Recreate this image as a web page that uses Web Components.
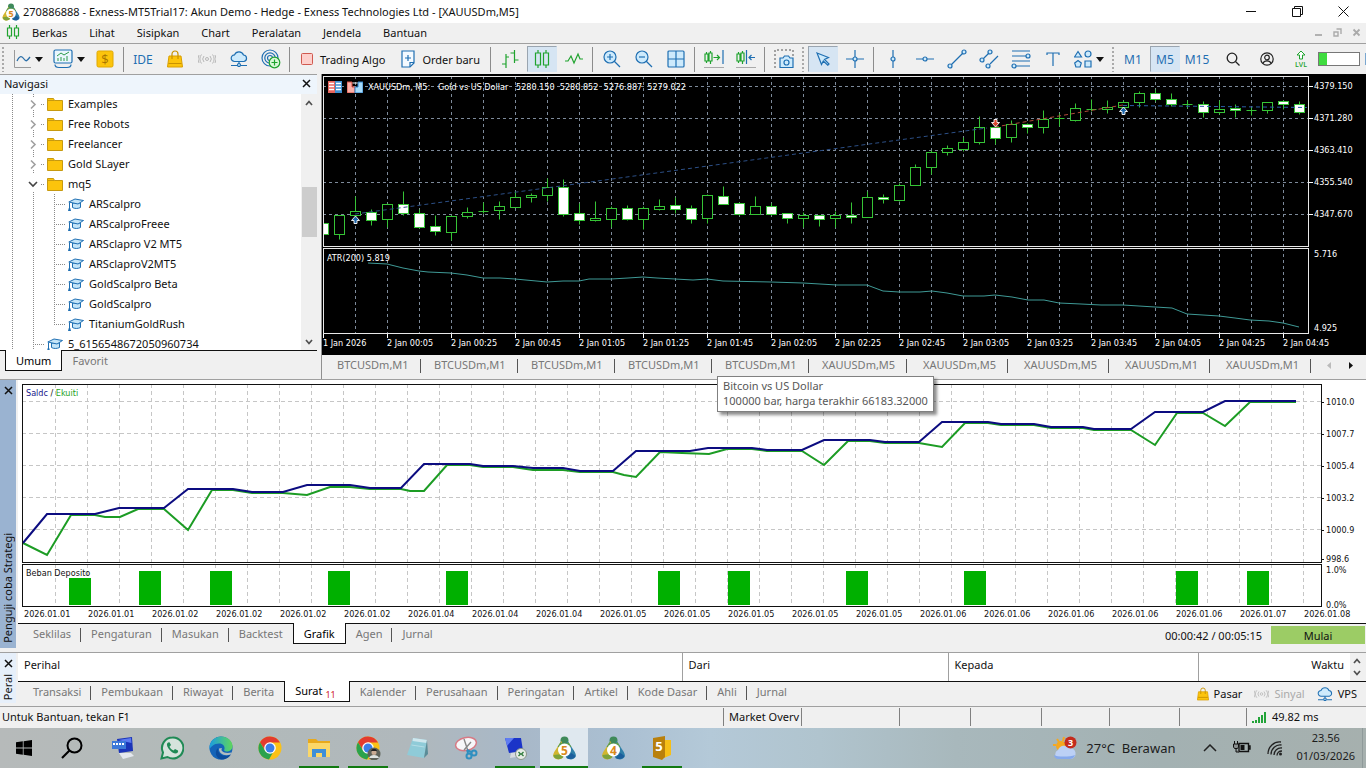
<!DOCTYPE html>
<html lang="id">
<head>
<meta charset="utf-8">
<title>270886888 - Exness-MT5Trial17</title>
<style>
html,body{margin:0;height:100%}
body{font:11px/15px "Noto Sans","Open Sans",sans-serif;color:#111;background:#f0f0f0}
</style>
</head>
<body>
<terminal-app></terminal-app>
<script>
const BASE = `*{box-sizing:border-box}
button{font:inherit;color:inherit;background:none;border:0;padding:0;margin:0;cursor:default}`;
function define(name, css, html, setup) {
  const t = document.createElement('template');
  t.innerHTML = `<style>${BASE}${css}</style>${html}`;
  customElements.define(name, class extends HTMLElement {
    constructor() {
      super();
      this.attachShadow({mode: 'open'}).append(t.content.cloneNode(true));
    }
    connectedCallback() { if (setup && !this.ready) { this.ready = true; setup(this, this.shadowRoot); } }
  });
}

/* ---------- icons ---------- */
const B = 'fill="none" stroke="#1f6fb2" stroke-width="1.2"';
const BF = 'fill="#cdeafc" stroke="#1f6fb2" stroke-width="1.2"';
const G = 'fill="none" stroke="#1fa32e" stroke-width="1.2"';
const mtLogo = (n) => `<circle cx="12" cy="4.500" r="4" fill="#3f8a5a"/><path d="M9 5 3 14c-2 3-3 5-2 7 2 3 6 3 9 1l2-8z" fill="#d2b62f"/><path d="M1 19c0 4 6 6 10 2l-1-3z" fill="#7da23a"/><path d="M15 5l6 9c2 3 3 5 2 7-2 3-6 3-9 1l-3-8z" fill="#2f7fa8"/><path d="M8 6c2 2 6 2 8 0l3 5H5z" fill="#5f9c4c"/><path d="M14 22c3 2 8 1 9-2l-4-3z" fill="#1c5f9c"/><circle cx="12" cy="14" r="6.500" fill="#fff"/><text x="12" y="18.500" text-anchor="middle" font-family="Open Sans" font-weight="700" font-size="12" fill="#d98a1c">${n}</text>`;
const chrome = '<circle cx="12" cy="12" r="11.500" fill="#fbc116"/><path d="M12 .5A11.500 11.500 0 0 0 2 6.200L7.500 15 12 6.500h10A11.500 11.500 0 0 0 12 .5z" fill="#e33b2e"/><path d="M2 6.200A11.500 11.500 0 0 0 11 23.500l5-9-8.500.8z" fill="#2ba24c"/><circle cx="12" cy="12" r="5.800" fill="#fff"/><circle cx="12" cy="12" r="4.500" fill="#3b7de8"/>';
const ICONS = {
  app: [18, 18, '0 0 24 24', mtLogo(5)],
  candles: [14, 16, '0 0 14 16', `<path ${G} d="M3.500 1v3M3.500 12v3M1.500 4h4v8h-4zM10.500 1v3M10.500 12v3M8.500 4h4v8h-4z"/>`],
  linechart: [18, 18, '0 0 18 18', '<path d="M1.500 0v17.500H18" fill="none" stroke="#9a9a9a"/><path d="M4 11c3-6 5-5 7-2s3 2 6-2" fill="none" stroke="#2a6ea8" stroke-width="1.300"/>'],
  indicator: [20, 20, '0 0 20 20', `<rect ${B} x="1" y="1" width="18" height="13" rx="1.500" style="fill:#eaf6fd"/><path ${B} d="M2 15.500c0 2 2 3 4 3h8c2 0 4-1 4-3"/><path d="M4 7l4-3 3 2 5-3M5 12V9M8 12V8M11 12V9M14 12V7" fill="none" stroke="#2a9a4a"/>`],
  dollar: [18, 18, '0 0 18 18', '<rect x="1" y="1" width="16" height="16" rx="1.500" fill="#fcc40c" stroke="#e0a800"/><text x="9" y="13.500" text-anchor="middle" font-family="Open Sans" font-size="13" fill="#a87400">$</text>'],
  bag: [16, 18, '0 0 16 18', '<path d="M2 6h12l1.500 11h-15z" fill="#fcc40c" stroke="#d99f00"/><path d="M5 9V4a3 3 0 0 1 6 0v5M1.500 13.500h13" fill="none" stroke="#c89200" stroke-width="1.200"/>'],
  signal: [18, 14, '0 0 18 14', '<g fill="none" stroke="#b8b8b8"><circle cx="9" cy="7" r="1.500"/><path d="M6 4a4.500 4.500 0 0 0 0 6M12 4a4.500 4.500 0 0 1 0 6M3.500 2.500a7 7 0 0 0 0 9M14.500 2.500a7 7 0 0 1 0 9M1 3a8 8 0 0 0 0 8M17 3a8 8 0 0 1 0 8"/></g>'],
  cloud: [18, 16, '0 0 18 16', `<path ${BF} d="M4.500 10.500a3.300 3.300 0 0 1 0-6.600A4.800 4.800 0 0 1 13.500 4a3.300 3.300 0 0 1 .5 6.500z"/><path ${B} d="M9 10.500V13M1 14.500h6M11 14.500h6"/><circle ${BF} cx="9" cy="14" r="1.500"/>`],
  rings: [20, 20, '0 0 20 20', `<g ${B}><circle cx="9" cy="9" r="2.500"/><circle cx="9" cy="9" r="5.200"/><circle cx="9" cy="9" r="8"/></g><circle cx="13.500" cy="13.500" r="5.300" fill="#d8f8d8" stroke="#1fa32e" stroke-width="1.200"/><path ${G} d="M13.500 10.500v6M10.500 13.500h6"/>`],
  stop: [12, 12, '0 0 12 12', '<rect x=".5" y=".5" width="11" height="11" rx="1" fill="#fdd0cc" stroke="#d0594f"/>'],
  order: [14, 18, '0 0 14 18', `<path ${B} style="fill:#f4faff" d="M1 1h12v12l-4 4H1z"/><path ${B} d="M13 12.500H9V17M7 5v6M4 8h6"/>`],
  bars: [18, 18, '0 0 18 18', `<path ${G} d="M5 4v14M1 14h4M5 7h3M13.500 0v13M9.500 3h4M13.500 10h4"/>`],
  bigcandles: [16, 18, '0 0 16 18', `<path ${G} d="M4 0v3M4 15v3M1.500 3h5v12h-5zM12 0v3M12 15v3M9.500 3h5v12h-5z"/>`],
  zigzag: [18, 14, '0 0 18 14', `<path ${G} d="M0 9h3l3-5 3 7 4-9 2 5h3"/>`],
  zoomin: [18, 18, '0 0 18 18', `<path ${B} d="M11 11l6 6"/><circle ${BF} cx="7" cy="7" r="6"/><path ${B} d="M7 4v6M4 7h6"/>`],
  zoomout: [18, 18, '0 0 18 18', `<path ${B} d="M11 11l6 6"/><circle ${BF} cx="7" cy="7" r="6"/><path ${B} d="M4 7h6"/>`],
  tile: [18, 18, '0 0 18 18', `<rect ${BF} x="1" y="1" width="16" height="16" rx="1"/><path ${B} d="M9 1v16M1 9h16"/>`],
  scroll: [20, 18, '0 0 20 18', `<path ${G} d="M2.500 2v2M2.500 11v2M1 4h3v7H1zM6.500 1v2M6.500 11v3M5 3h3v8H5zM9.500 7.500h6M13 5l2.500 2.500L13 10"/><path ${B} d="M19 0v14"/><path d="M0 17.500h20" stroke="#aaa"/>`],
  shift: [20, 18, '0 0 20 18', `<path ${G} d="M2.500 2v2M2.500 11v2M1 4h3v7H1zM6.500 1v2M6.500 11v3M5 3h3v8H5z"/><path ${B} d="M10.500 0v14M19 7.500h-6M15.500 5L13 7.500l2.500 2.500"/><path d="M0 17.500h20" stroke="#aaa"/>`],
  camera: [20, 20, '0 0 20 20', `<path d="M1 19V1h18v6" fill="none" stroke="#555" stroke-dasharray="2 2"/><path ${BF} d="M6 9h3l1.500-2h4L16 9h3v9.500H6z"/><circle ${BF} cx="12.500" cy="13.500" r="2.500"/>`],
  arrow: [14, 14, '0 0 14 14', `<path ${BF} d="M1 1l11.500 4.500L8.500 7.500 13 12l-1.200 1.200L7.300 9 5.500 12.500z"/>`],
  cross: [18, 18, '0 0 18 18', `<path ${B} d="M9 0v7M9 11v7M0 9h7M11 9h7"/><circle ${BF} cx="9" cy="9" r="2"/>`],
  vline: [18, 18, '0 0 18 18', `<path ${B} d="M9 0v7M9 11v7"/><circle ${BF} cx="9" cy="9" r="2"/>`],
  hline: [18, 18, '0 0 18 18', `<path ${B} d="M0 9h7M11 9h7"/><circle ${BF} cx="9" cy="9" r="2"/>`],
  trend: [20, 20, '0 0 20 20', `<path ${B} d="M4 16L16 4"/><circle ${BF} cx="3" cy="17" r="2"/><circle ${BF} cx="17" cy="3" r="2"/>`],
  channel: [20, 20, '0 0 20 20', `<path ${B} d="M4 10l6-6M11 15l8-8"/><circle ${BF} cx="3" cy="11" r="2"/><circle ${BF} cx="11" cy="3" r="2"/><circle ${BF} cx="9" cy="17" r="2"/>`],
  fibo: [20, 20, '0 0 20 20', `<path ${B} d="M1 2h18M1 7h14M1 12h18M5 17h14"/><circle ${BF} cx="17" cy="7" r="2"/><circle ${BF} cx="3" cy="17" r="2"/>`],
  text: [14, 14, '0 0 14 14', `<path ${B} d="M1 3V1h12v2M7 1v13"/>`],
  shapes: [18, 18, '0 0 18 18', `<path ${BF} d="M4 1.500L7.500 7h-7z"/><circle ${BF} cx="14" cy="4" r="3"/><path ${BF} d="M4 10.500l3.300 2.500-1.200 4H1.900L.7 13zM11 11h6v6h-6z"/>`],
  search: [14, 14, '0 0 14 14', '<path d="M9.500 9.500l4 4" stroke="#222" stroke-width="1.300"/><circle cx="6" cy="6" r="4.800" fill="none" stroke="#222" stroke-width="1.300"/>'],
  user: [14, 14, '0 0 14 14', '<g fill="none" stroke="#222" stroke-width="1.200"><circle cx="7" cy="7" r="6.200"/><circle cx="7" cy="5.500" r="2.300"/><path d="M3 11.500c1-3.500 7-3.500 8 0"/></g>'],
  lvl: [14, 18, '0 0 14 18', `<path d="M5.500 9V5H3l4-4 4 4H8.500v4z" fill="#fff" stroke="#1fa32e"/><text x="7" y="17" text-anchor="middle" font-family="Open Sans" font-size="7" font-weight="600" fill="#1fa32e">LVL</text>`],
  caret: [8, 5, '0 0 8 5', '<path d="M0 0h8L4 5z" fill="#111"/>'],
  folder: [16, 14, '0 0 16 14', '<path d="M.5 1.500h6l1 2h8v10H.5z" fill="#fcc40c" stroke="#c79a10"/><path d="M.5 3.500h7" stroke="#c79a10"/>'],
  cap: [16, 14, '0 0 16 14', '<path d="M4.500 6v4.500c2 1.300 5.500 1.300 8 0V6z" fill="#c4e5f8" stroke="#1f6fb2"/><path d="M.8 5L7 2l8.500 1.500L10 7z" fill="#c4e5f8" stroke="#1f6fb2" stroke-linejoin="round"/><path d="M1.500 5.500v6" fill="none" stroke="#1f6fb2"/><path d="M0 14l.8-3h1.400L3 14z" fill="#1f6fb2"/>'],
  close: [9, 9, '0 0 9 9', '<path d="M1 1l7 7M8 1L1 8" stroke="#111" stroke-width="1.500"/>'],
  up: [8, 6, '0 0 8 6', '<path d="M1 5l3-3.500L7 5" fill="none" stroke="#505050" stroke-width="1.700"/>'],
  down: [8, 6, '0 0 8 6', '<path d="M1 1l3 3.500L7 1" fill="none" stroke="#505050" stroke-width="1.700"/>'],
  min: [11, 11, '0 0 11 11', '<path d="M0 5.500h10" stroke="#111"/>'],
  restore: [11, 11, '0 0 11 11', '<path d="M.5 2.500h8v8h-8zM2.500 2.500v-2h8v8h-2" fill="none" stroke="#111"/>'],
  x: [11, 11, '0 0 11 11', '<path d="M.5.5l10 10M10.500.5l-10 10" stroke="#111"/>'],
  mmin: [9, 9, '0 0 9 9', '<path d="M1 7h7" stroke="#aaa" stroke-width="1.800"/>'],
  mrestore: [9, 9, '0 0 9 9', '<path d="M1 4h4v4H1zM3.500 1H8v5" fill="none" stroke="#aaa" stroke-width="1.400"/>'],
  mx: [9, 9, '0 0 9 9', '<path d="M1.500 1.500l6 6M7.500 1.500l-6 6" stroke="#aaa" stroke-width="1.800"/>'],
  left: [5, 7, '0 0 5 7', '<path d="M4 0v7L0 3.500z" fill="#bbb"/>'],
  right: [5, 7, '0 0 5 7', '<path d="M1 0v7l4-3.500z" fill="#111"/>'],
  depth: [14, 12, '0 0 14 12', '<rect width="7" height="12" fill="#e8655c"/><rect x="7" width="7" height="12" fill="#3f8fd0"/><path d="M1 2.500h5M1 5.500h5M1 8.500h5M8 2.500h5M8 5.500h5M8 8.500h5" stroke="#fff" stroke-width="1.600"/>'],
  trade: [16, 12, '0 0 16 12', '<path d="M0 1h5v5h3v6H0z" fill="#fbb0a8" stroke="#d84c40"/><path d="M16 1h-5v5H8v6h8z" fill="#a8dcfb" stroke="#2f80c8"/><path d="M5.500 2h5" stroke="#fff"/>'],
  ping: [14, 11, '0 0 14 11', '<path d="M1 11V9M4 11V8M7 11V5M10 11V3M13 11V0" stroke="#22a338" stroke-width="2"/>'],
  win: [16, 16, '0 0 16 16', '<path d="M0 2.300l6.800-1v6.300H0zM7.600 1.200L16 0v7.600H7.600zM0 8.400h6.800v6.300L0 13.700zM7.600 8.400H16V16l-8.400-1.200z" fill="#000"/>'],
  find: [22, 22, '0 0 22 22', '<circle cx="13.500" cy="8.500" r="7" fill="none" stroke="#000" stroke-width="2"/><path d="M8.500 13.500L1 21" stroke="#000" stroke-width="2.200"/>'],
  rdp: [24, 24, '0 0 24 24', '<path d="M6 3l15-2 1 14-14 2z" fill="#1b34b8"/><path d="M7 4l13-2 .5 5z" fill="#5c7af0"/><path d="M1 5h14v8H1z" fill="#3c78d8"/><path d="M2 8h12" stroke="#fff" stroke-width="2" stroke-dasharray="2 1"/><path d="M8 17h12l3 3-11 3z" fill="#e4e8ee"/>'],
  whatsapp: [24, 24, '0 0 24 24', '<path d="M12.500 1.500a10.500 10.500 0 1 1-5 19.500L1.500 22.500l1.500-6A10.500 10.500 0 0 1 12.500 1.500z" fill="#d5e3dc" stroke="#1f8a55" stroke-width="2"/><path d="M8 6.500c-1.500 1-1.500 3 .5 6s5 5 7.500 5c1.500-.5 2.500-1.500 2-3l-3-1.500-1.500 1.500c-2-.8-3-2-4-3.800L11 9 9.500 6.200z" fill="#1f8a55"/>'],
  edge: [24, 24, '0 0 24 24', '<defs><linearGradient id="e" x1="0" x2="1"><stop stop-color="#1b9de0"/><stop offset="1" stop-color="#5fd65c"/></linearGradient></defs><circle cx="12" cy="12" r="11.500" fill="#1464b8"/><path d="M.5 11C1 4 7 .5 12 .5c7 0 11.500 5 11.500 9.500 0 4-3 5.500-6 5.500-2 0-3-1-2-2.500C16 10 14 7.500 10 7.500 5 7.500 1 11 .5 14z" fill="url(#e)"/><path d="M9 12c-1 5 4 9 10 7.500l3-1A11.500 11.500 0 0 1 12 23.500C7 22 5 16 9 12z" fill="#0c4c9c"/><path d="M13 12c-2 3 2 6 9.500 4.500l-1 2C15 21 9.500 17 10 12.500z" fill="#b2bcbf"/>'],
  chrome: [24, 24, '0 0 24 24', chrome],
  files: [24, 24, '0 0 24 24', '<path d="M1 3h8l2 2h12v16H1z" fill="#e8a91c"/><path d="M1 7h22v14H1z" fill="#fbd768"/><path d="M5 21v-8h14v8h-4v-4H9v4z" fill="#3f8fd8"/>'],
  chrome2: [25, 24, '0 0 25 24', chrome + '<circle cx="18" cy="18" r="6.500" fill="#5d6258"/><circle cx="18" cy="16.500" r="2.500" fill="#c9ab92"/><path d="M13 22c1-4 9-4 10 0z" fill="#dfe4e0"/><path d="M15 15c1-3 5-3 6 0z" fill="#222"/>'],
  notepad: [24, 24, '0 0 24 24', '<path d="M8 2l14 2-3 18L2 19z" fill="#8fcbd8"/><path d="M8 2l14 2-.5 3-14-2z" fill="#cfe7ee"/><path d="M22 4l1 14-4 4z" fill="#5a8c98"/><path d="M6.500 9l13 2" stroke="#b5dde6"/>'],
  snip: [24, 24, '0 0 24 24', '<ellipse cx="12" cy="8" rx="10.500" ry="6.500" fill="#f7f7f9" stroke="#d77a85" stroke-width="1.500" transform="rotate(-12 12 8)"/><path d="M10 3l4 12M17 6l-7 8" stroke="#888" stroke-width="1.400"/><g fill="none" stroke="#2f8fc0" stroke-width="2"><circle cx="15" cy="20" r="2.500"/><circle cx="20" cy="17" r="2.500"/><path d="M14 17l-1-3M17 16l-4-2"/></g>'],
  monitor: [24, 24, '0 0 24 24', '<path d="M2 2l16 0 2 13-14 2z" fill="#1b34c8"/><path d="M2 2h9l-7 8z" fill="#5f7cf2"/><path d="M8 17l9-1 2 4-12 2z" fill="#d7dbe0"/><circle cx="18" cy="18" r="5.500" fill="#e6ece6" stroke="#8a958a"/><path d="M15.500 20l2-2-2-2M20.500 16l-2 2 2 2" fill="none" stroke="#2d7a3a" stroke-width="1.300"/>'],
  mt5: [25, 24, '0 0 24 24', mtLogo(5)],
  mt4: [25, 24, '0 0 24 24', mtLogo(4)],
  editor: [20, 24, '0 0 20 24', '<path d="M8 4h11v15l-7 3z" fill="#f6bf17"/><path d="M1 2l12-2v21l-3 3-9-3z" fill="#b9800c"/><text x="7" y="15" text-anchor="middle" font-family="Open Sans" font-weight="700" font-size="13" fill="#fff">5</text>'],
  weather: [26, 24, '0 0 26 24', '<circle cx="9" cy="10" r="5" fill="#f5a821"/><path d="M5 3l2 3M1 9h3M12 1l-1 4" stroke="#f5a821" stroke-width="2"/><path d="M6 23a5 5 0 0 1 0-9 6.500 6.500 0 0 1 11-2 5.500 5.500 0 0 1 2 11z" fill="#bcd0f5"/><path d="M2 19c3 2 16 2 21 0-1 3-3 4-5 4H6c-2 0-4-2-4-4z" fill="#86a9ec"/><circle cx="18.500" cy="6.500" r="6" fill="#c42b1c"/><text x="18.500" y="10" text-anchor="middle" font-family="Open Sans" font-weight="700" font-size="9" fill="#fff">3</text>'],
  chevron: [14, 8, '0 0 14 8', '<path d="M1 7l6-6 6 6" fill="none" stroke="#222" stroke-width="1.500"/>'],
  battery: [18, 14, '0 0 18 14', '<path d="M6 2.500h9.500v8H6zM15.500 5h1.500v3h-1.500" fill="none" stroke="#111" stroke-width="1.400"/><path d="M7.500 4h4v5h-4z" fill="#111"/><path d="M1.500 0v3M4.500 0v3M.5 3h5v3l-1 1.500h-3L.5 6zM3 7.500v3.500h3" fill="#8a9090" stroke="#111"/>'],
  wifi: [16, 16, '0 0 16 16', '<g fill="none" stroke="#222" stroke-width="1.300"><path d="M1 14C1 7 7 1 14 2M4 14.500C4 9 9 4 14.500 5M7 15c0-4 3.500-7.500 8-7M10 15.500c0-2.500 2-4.500 5-4.500"/></g><circle cx="13.500" cy="14" r="1.500" fill="#222"/>']
};
customElements.define('mt-icon', class extends HTMLElement {
  constructor() { super(); this.attachShadow({mode: 'open'}); }
  connectedCallback() {
    const [w, h, box, body] = ICONS[this.getAttribute('name')];
    const s = this.getAttribute('width');
    const W = s ? +s : w, H = s ? Math.round(h * s / w) : h;
    this.shadowRoot.innerHTML = `<style>:host{display:inline-flex;flex:none}svg{display:block}</style><svg width="${W}" height="${H}" viewBox="${box}" aria-hidden="true">${body}</svg>`;
  }
});
const ic = (n, w) => `<mt-icon name="${n}"${w ? ` width="${w}"` : ''}></mt-icon>`;

/* ---------- title, menu ---------- */
define('title-bar', `:host{display:flex;align-items:center;height:23px;background:#fff;padding-left:2px}
span{flex:1;padding-left:3px}button{width:46px;height:22px;display:flex;align-items:center;justify-content:center}`,
`${ic('app')}<span>270886888 - Exness-MT5Trial17: Akun Demo - Hedge - Exness Technologies Ltd - [XAUUSDm,M5]</span>
<button aria-label="Minimize">${ic('min')}</button><button aria-label="Restore">${ic('restore')}</button><button aria-label="Close">${ic('x')}</button>`);

define('menu-bar', `:host{display:flex;align-items:center;height:21px;border-bottom:1px solid #a0a0a0;padding:0 0 2px 6px}
nav{display:flex;flex:1;padding-left:1px}nav button{padding:0 11px}.w{width:19px;display:flex;justify-content:center}`,
`${ic('candles')}<nav>${['Berkas','Lihat','Sisipkan','Chart','Peralatan','Jendela','Bantuan'].map(t => `<button>${t}</button>`).join('')}</nav>
<button class="w" aria-label="Minimize chart">${ic('mmin')}</button><button class="w" aria-label="Restore chart">${ic('mrestore')}</button><button class="w" aria-label="Close chart">${ic('mx')}</button>`);

/* ---------- toolbar ---------- */
define('tool-button', `:host{display:flex;flex:none;width:32px;padding:0 1px}
:host([wide]){width:41px}:host([label]){width:auto}:host([end]){width:34px}
button{flex:1;height:26px;display:flex;align-items:center;justify-content:center;gap:4px;border:1px solid transparent;color:#1f6fb2;font-size:12px}
:host([label]) button{color:#111;font-size:11px;gap:7px;padding:0 6px}
:host([active]) button{background:#d6e5f3;border-color:#9aa5b0 #d6e5f3 #d6e5f3 #9aa5b0}`,
`<button><slot></slot></button>`, (el, r) => { const a = el.getAttribute('name'); if (a) r.querySelector('button').setAttribute('aria-label', a); });
const tb = (n, attr = '') => `<tool-button name="${n}" ${attr}>${ic(n)}${attr.includes('wide') ? ic('caret') : ''}</tool-button>`;
const sep = '<i class="sep"></i>', grip = '<i class="grip"></i>';
define('tool-bar', `:host{display:flex;align-items:center;height:30px;overflow:hidden}
.sep{width:6px;height:25px;flex:none;border-left:2px solid transparent;box-shadow:inset 1px 0 #8c8c8c}
.grip{width:7px;height:25px;flex:none;background:repeating-linear-gradient(#aaa 0 2px,transparent 2px 4px) 2px 0/2px 100% no-repeat}
.end{display:flex;align-items:center;padding-left:3px;flex:1}
meter{appearance:none;width:42px;height:14px;border:1px solid #777;background:linear-gradient(90deg,#3fdc3f 8px,#fff 8px);display:block;flex:none}
meter::-webkit-meter-inner-element{display:none}
.edge{width:1px;height:12px;background:#7aa7d0;margin-left:auto}`,
grip + tb('linechart', 'wide') + tb('indicator', 'wide') + tb('dollar') + sep +
'<tool-button>IDE</tool-button>' + tb('bag') + tb('signal') + tb('cloud') + tb('rings') + sep +
`<tool-button label>${ic('stop')}Trading Algo</tool-button><tool-button label>${ic('order')}Order baru</tool-button>` + sep +
tb('bars') + tb('bigcandles', 'active') + tb('zigzag') + sep + tb('zoomin') + tb('zoomout') + tb('tile') + sep +
tb('scroll') + tb('shift') + sep + tb('camera') + grip + tb('arrow', 'active') + tb('cross') + sep +
tb('vline') + tb('hline') + tb('trend') + tb('channel') + tb('fibo') + tb('text') + tb('shapes', 'wide') + grip +
'<tool-button>M1</tool-button><tool-button active>M5</tool-button><tool-button>M15</tool-button>' +
`<div class="end">${tb('search', 'end')}${tb('user', 'end')}${tb('lvl', 'end')}<meter min="0" max="40" value="8" aria-label="Level"></meter><i class="edge"></i></div>`);

/* ---------- tabs ---------- */
define('tab-item', `:host{display:flex;position:relative;flex:none;height:20px;color:#777}
:host([sep])::after{content:"";width:1px;height:14px;background:#555;margin-top:4px;margin-left:-1px}
button{padding:0 var(--pad,10px);height:18px}
:host([active]){color:#000;background:#fff;border:1px solid #111;border-top:0;margin-top:-1px;height:21px}:host([active]) button{height:20px}`,
`<button role="tab"><slot></slot></button><slot name="tip"></slot>`);
define('tab-bar', `:host{display:flex;border-top:1px solid #111;padding-left:5px;height:27px}
:host([plain]){border-top:0;padding-left:3px;--pad:12px;height:24px}`, `<slot></slot>`);
const tabs = (list, active) => list.map((t, i) => `<tab-item ${i === active ? 'active' : (i + 1 === active || i === list.length - 1) ? '' : 'sep'}>${t}</tab-item>`).join('');

/* ---------- navigator ---------- */
const dots = 'stroke="#8a8a8a" stroke-dasharray="1 1" fill="none"';
const guides = {
  closed: `<svg width="44" height="20"><path ${dots} d="M12.500 0v20M33.500 0v4M33.500 16v4M41 10.500h3"/><path d="M31 6.500l4 4-4 4" fill="none" stroke="#a0a0a0" stroke-width="1.600"/></svg>`,
  open: `<svg width="44" height="20"><path ${dots} d="M12.500 0v20M33.500 18v2M41 10.500h3"/><path d="M29 8l4 4 4-4" fill="none" stroke="#444" stroke-width="1.600"/></svg>`,
  child: `<svg width="65" height="20"><path ${dots} d="M12.500 0v20M33.500 0v20M54.500 0v20M54 10.500h11"/></svg>`,
  last: `<svg width="65" height="20"><path ${dots} d="M12.500 0v20M33.500 0v20M54.500 0v10M54 10.500h11"/></svg>`,
  leaf: `<svg width="44" height="20"><path ${dots} d="M12.500 0v20M33.500 0v20M33 10.500h11"/></svg>`
};
define('tree-row', `:host{display:flex;align-items:center;height:20px;white-space:nowrap}
div{display:flex;margin-right:3px}div svg{display:block}mt-icon{margin-right:5px}slot{display:block;margin-bottom:2px}`,
`<div></div><slot></slot>`, (el, r) => {
  const k = el.getAttribute('kind');
  r.querySelector('div').innerHTML = guides[k];
  r.querySelector('div').insertAdjacentHTML('afterend', ic(k === 'closed' || k === 'open' ? 'folder' : 'cap'));
});
const row = (k, t) => `<tree-row role="treeitem" kind="${k}">${t}</tree-row>`;
define('nav-panel', `:host{display:flex;flex-direction:column;flex:none;width:317px;border-top:1px solid #a0a0a0}
header{display:flex;justify-content:space-between;align-items:center;height:19px;padding:0 6px 2px 4px;background:#eef5fc}
.body{display:flex;height:256px;background:#fff}
.tree{flex:1;overflow:hidden}
.bar{width:16px;background:#f0f0f0;display:flex;flex-direction:column;align-items:center;padding:6px 0 5px}
.thumb{width:15px;height:50px;background:#cdcdcd;margin-top:81px;margin-bottom:auto}`,
`<header>Navigasi<button aria-label="Close">${ic('close')}</button></header>
<div class="body"><div class="tree" role="tree">` +
['Examples','Free Robots','Freelancer','Gold SLayer'].map(t => row('closed', t)).join('') + row('open', 'mq5') +
['ARScalpro','ARScalproFreee','ARSclapro V2 MT5','ARSclaproV2MT5','GoldScalpro Beta','GoldScalpro'].map(t => row('child', t)).join('') +
row('last', 'TitaniumGoldRush') + row('leaf', '5_6156548672050960734') +
`</div><div class="bar">${ic('up')}<div class="thumb"></div>${ic('down')}</div></div>
<tab-bar>${tabs(['Umum','Favorit'], 0)}</tab-bar>`);

/* ---------- price chart ---------- */
/* kind, high, top, bottom, low; one bar every 16px */
const BARS = [['w',223,223,234,234],['g',215,215,234,239],['g',196,211,215,219],['w',209,212,220,225],['g',203,204,219,227],['w',191,204,213,215],['w',209,213,227,228],['w',215,226,231,235],['g',215,216,232,240],['g',207,212,216,218],['d',202,211,211,213],['g',201,206,210,219],['g',191,197,207,207],['g',193,195,197,202],['g',178,187,195,201],['w',179,187,214,216],['w',203,213,220,224],['g',201,218,220,221],['g',206,208,219,227],['w',205,208,219,220],['g',206,208,219,229],['g',199,206,209,210],['w',197,205,209,213],['w',205,208,219,223],['g',194,195,218,223],['w',186,196,204,204],['w',202,203,214,215],['g',196,206,214,214],['w',203,206,214,215],['w',213,213,218,223],['g',212,215,218,227],['w',215,215,219,226],['g',211,215,218,227],['w',202,215,217,223],['g',191,197,217,217],['w',194,197,199,203],['g',183,185,200,201],['g',164,167,185,185],['g',150,152,167,174],['g',145,148,152,155],['g',137,142,149,151],['g',116,127,142,144],['w',123,127,138,144],['g',120,124,137,142],['w',123,124,127,133],['g',110,119,127,133],['d',113,118,118,126],['g',103,108,120,121],['d',99,109,109,111],['g',100,107,109,113],['g',100,102,107,108],['g',91,93,102,107],['w',89,93,99,101],['w',93,99,104,106],['d',100,104,104,108],['w',101,104,112,117],['g',100,109,112,114],['w',104,108,110,117],['d',107,110,110,115],['g',102,102,110,113],['w',100,101,104,109],['w',101,104,112,114]];
const ATR = '368,263 387,264 403,268 419,271 428,272 451,273 467,275 483,278 500,278 515,279 547,282 563,281 579,281 589,279 611,279 628,278 643,277 657,278 693,280 707,279 723,281 771,282 803,283 837,285 867,285 883,291 899,292 920,292 932,291 947,293 963,296 984,296 995,295 1012,297 1028,300 1044,300 1059,303 1081,304 1101,305 1123,305 1155,307 1172,308 1187,314 1219,316 1235,318 1250,320 1269,321 1283,323 1299,327';
const cols = (n, first, h) => Array.from({length: n}, (_, k) => `M${first + 32 * k}.500 0v${h}`).join('');
const candle = ([k, h, t, b, l], i) => {
  const x = i * 16 + .5, y = v => v - 76 + .5;
  if (k === 'd') return `<path d="M${x} ${y(h)}V${y(l)}M${x - 5} ${y(t)}h10"/>`;
  return `<path d="M${x} ${y(h)}V${y(t)}M${x} ${y(b)}V${y(l)}"/><rect x="${x - 5}" y="${y(t)}" width="10" height="${b - t}" ${k === 'w' ? 'fill="#fff"' : 'fill="#000"'}/>`;
};
const marker = (x, y, c, flip = 1) => `<path transform="translate(${x - 322.5} ${y - 76}) scale(1 ${flip})" d="M0-4L4 .5H1.500v3h-3v-3H-4z" fill="${c}" stroke="#fff" stroke-width=".9"/>`;
const GR = 'fill="none" stroke="#7d8a9a" stroke-dasharray="3 3"';
define('price-chart', `:host{display:flex;flex-direction:column;background:#000;color:#fff;padding:2px 0 0 1px;height:281px;font:9px/12px "DejaVu Sans Condensed","DejaVu Sans",sans-serif}
.row{display:flex}.plot{flex:1;min-width:0;position:relative;outline:1px solid #e8e8e8;outline-offset:-1px}
svg{display:block;width:100%}.p1{height:171px;margin-bottom:1px}.p2{height:86px}
.p1 svg{height:171px}.p2 svg{height:86px}
.head{position:absolute;left:5px;top:5px;display:flex;align-items:center;gap:5px;white-space:pre}
.sub{position:absolute;left:4px;top:4px}
.axis{width:57px;display:flex;flex-direction:column}
.axis.a{gap:12px}.axis.a span{line-height:20px;display:flex;align-items:center;gap:1px}
.axis.a span::before{content:"";width:4px;height:1px;background:#fff}
.axis.b{justify-content:space-between;padding-left:5px}
.time{display:flex;height:20px}
.time span{width:64px;flex:none;white-space:nowrap;padding-top:3px;background:linear-gradient(#fff,#fff) 0 0/1px 4px no-repeat}`,
`<div class="row"><div class="plot p1"><svg>
<path ${GR} d="${cols(60, 32, 171)}"/>${[10,42,74,106,138].map(y => `<line ${GR} x1="0" x2="100%" y1="${y}.500" y2="${y}.500"/>`).join('')}
<g stroke="#36c436" fill="none">${BARS.map(candle).join('')}</g>
<path d="M32 138L664 52" stroke="#2c4f86" stroke-dasharray="4 3"/><path d="M672 51L800 29" stroke="#b04a3a" stroke-dasharray="4 3"/><path d="M800 29.500L984 31.500" stroke="#2c5fa6" stroke-dasharray="4 3"/>
${marker(355, 220, '#1c64a8')}${marker(1123, 111, '#1c64a8')}${marker(995, 123, '#d8442c', -1)}</svg>
<div class="head">${ic('depth')}${ic('trade')}<span>XAUUSDm, M5:   Gold vs US Dollar   5280.150  5280.852  5276.887  5279.022</span></div></div>
<div class="axis a">${['4379.150','4371.280','4363.410','4355.540','4347.670'].map(t => `<span>${t}</span>`).join('')}</div></div>
<div class="row"><div class="plot p2"><svg><path ${GR} d="${cols(60, 32, 86)}"/>
<polyline transform="translate(-323 -248)" points="${ATR}" fill="none" stroke="#3f9a96"/></svg><div class="sub">ATR(200) 5.819</div></div>
<div class="axis b"><span>5.716</span><span>4.925</span></div></div>
<div class="time">${['1 Jan 2026','00:05','00:25','00:45','01:05','01:25','01:45','02:05','02:25','02:45','03:05','03:25','03:45','04:05','04:25','04:45'].map((t, i) => `<span>${i ? '2 Jan ' + t : t}</span>`).join('')}</div>`);

define('hover-tip', `:host{position:absolute;left:4px;top:21px;z-index:5;white-space:nowrap;background:#fff;border:1px solid #808080;color:#575757;padding:1px 5px 3px;box-shadow:3px 3px 3px rgba(0,0,0,.45)}`, `<slot></slot>`);

define('chart-area', `:host{display:block;flex:1;min-width:0;border-left:1px solid #909090;margin-left:4px}
.m1{width:97px}.m5{width:101px}
.end{margin-left:auto;display:flex;gap:16px;align-items:center;padding-right:13px;height:20px}.end button{display:flex}`,
`<price-chart></price-chart><tab-bar plain>` +
['BTCUSDm,M1','BTCUSDm,M1','BTCUSDm,M1','BTCUSDm,M1','BTCUSDm,M1','XAUUSDm,M5','XAUUSDm,M5','XAUUSDm,M5','XAUUSDm,M1','XAUUSDm,M1'].map((t, i) =>
`<tab-item sep class="${i < 5 ? 'm1' : 'm5'}">${t}${i === 4 ? '<hover-tip slot="tip" role="tooltip">Bitcoin vs US Dollar<br>100000 bar, harga terakhir 66183.32000</hover-tip>' : ''}</tab-item>`).join('') +
`<div class="end"><button aria-label="Previous">${ic('left')}</button><button aria-label="Next">${ic('right')}</button></div></tab-bar>`);

/* ---------- strategy tester ---------- */
const BAL = '23,543 47,514 95,514 119,508 164,508 188,489 233,489 252,492 283,492 307,485 350,485 370,488 401,488 424,464 470,464 483,466 513,466 533,468 563,468 580,471 613,471 636,451 690,451 708,448 752,448 767,450 802,450 824,440 870,440 885,442 919,442 942,422 988,422 1001,424 1034,424 1051,427 1083,427 1094,429 1131,429 1155,412 1203,412 1225,401 1296,401';
const EQ = '23,543 47,555 71,515 95,515 105,517 120,517 138,509 164,509 188,530 212,490 233,490 252,493 283,493 307,495 330,487 350,487 370,489 401,489 410,491 424,491 447,465 470,465 483,467 513,467 533,470 563,470 580,472 613,472 624,475 636,477 660,452 682,453 709,454 727,449 752,449 767,451 802,451 824,465 848,441 870,441 885,443 919,443 942,447 965,423 988,423 1001,425 1034,425 1051,428 1083,428 1094,430 1131,430 1155,445 1177,413 1203,413 1225,426 1250,402 1296,402';
const GT = 'fill="none" stroke="#c6c6c6" stroke-dasharray="4 3"';
define('side-strip', `:host{display:flex;flex-direction:column;justify-content:space-between;align-items:center;flex:none;width:16px;overflow:hidden}
button{margin-top:6px;display:flex}span{writing-mode:vertical-rl;transform:rotate(180deg);white-space:nowrap;line-height:16px}`,
`<button aria-label="Close">${ic('close')}</button><span><slot></slot></span>`);
define('tester-panel', `:host{display:flex;height:274px;border-bottom:1px solid #a0a0a0;border-top:1px solid #a0a0a0;background:#f0f0f0}
side-strip{background:#9ab3d1;height:268px;padding-bottom:5px}
main{flex:1;min-width:0;margin-left:2px}
.graph{background:#fff;height:243px;padding:4px 0 0 4px;font:9px/12px "DejaVu Sans Condensed","DejaVu Sans",sans-serif}
.row{display:flex}.left{flex:1;min-width:0}.plot{position:relative;outline:1px solid #111;outline-offset:-1px}
svg{display:block;width:100%}.p1,.p1 svg{height:179px}.p2,.p2 svg{height:43px}.p1{margin-bottom:1px}
.leg{position:absolute;left:4px;top:3px;color:#16168a}.leg b{font-weight:400;color:#111}.leg em{font-style:normal;color:#1fa31f}
.axis{width:44px;display:flex;flex-direction:column}
.a{height:180px;padding-top:12px;gap:20px}.a span{line-height:12px;flex:none;display:flex;align-items:center;gap:2px}
.a span:last-child{line-height:10px;height:8px;margin-top:-1px}
.a span::before{content:"";width:2px;height:1px;background:#111}
.b{height:46px;line-height:10px;justify-content:space-between;padding:1px 0 0 4px;margin-bottom:-4px}
.time{display:flex;height:0;line-height:10px}.time span{width:64px;flex:none;white-space:nowrap;padding:2px 0 0 2px}
.foot{display:flex}.foot tab-bar{flex:1}
.run{display:flex;align-items:center;gap:9px;border-top:1px solid #111;height:27px;padding:0 1px 4px 0}
.run button{width:94px;height:18px;background:#9ccc65}`,
`<side-strip>Penguji coba Strategi</side-strip><main><div class="graph">
<div class="row"><div class="left"><div class="plot p1"><svg><path ${GT} d="${cols(60, 33, 179)}"/>${[17,49,81,113,145].map(y => `<line ${GT} x1="0" x2="100%" y1="${y}.500" y2="${y}.500"/>`).join('')}
<g transform="translate(-22 -384)" fill="none" stroke-width="2"><polyline points="${EQ}" stroke="#1c9c24"/><polyline points="${BAL}" stroke="#0c0c80"/></g></svg>
<div class="leg">Saldc <b>/</b> <em>Ekuiti</em></div></div></div>
<div class="axis a">${['1010.0','1007.7','1005.4','1003.2','1000.9','998.6'].map(t => `<span>${t}</span>`).join('')}</div></div>
<div class="row"><div class="left"><div class="plot p2"><svg><path ${GT} d="${cols(60, 33, 43)}"/>
<g fill="#00b000">${[69,139,210,328,446,658,728,846,964,1176,1247].map((x, i) => `<rect x="${x - 22}" y="${i ? 7 : 14}" width="22" height="${i ? 34 : 27}"/>`).join('')}</g></svg>
<div class="leg"><b>Beban Deposito</b></div></div>
<div class="time">${['01.01','01.01','01.02','01.02','01.02','01.02','01.04','01.04','01.04','01.05','01.05','01.05','01.05','01.05','01.06','01.06','01.06','01.06','01.06','01.07','01.08'].map(t => `<span>2026.${t}</span>`).join('')}</div></div>
<div class="axis b"><span>1.0%</span><span>0.0%</span></div></div></div>
<div class="foot"><tab-bar>${tabs(['Seklilas','Pengaturan','Masukan','Backtest','Grafik','Agen','Jurnal'], 4)}</tab-bar>
<div class="run"><span>00:00:42 / 00:05:15</span><button>Mulai</button></div></div></main>`);

/* ---------- toolbox ---------- */
define('mail-panel', `:host{display:flex;height:54px;border-bottom:1px solid #a0a0a0}
side-strip{background:#e6effa;height:50px;padding-bottom:3px}
main{flex:1;min-width:0;margin-left:2px}
.list{display:flex;background:#fff;height:28px}
table{flex:1;border-collapse:collapse;table-layout:fixed;height:28px}
th{font-weight:400;text-align:left;padding:0 6px 6px;border-left:1px solid #a0a0a0}th:first-child{border-left:0}
.bar{width:16px;background:#f0f0f0;display:flex;flex-direction:column;align-items:center;justify-content:space-between;padding:5px 2px 5px 0}
.foot{display:flex}.foot tab-bar{flex:1}sub{color:#d01c2c;font-size:9px;line-height:9px;margin-left:3px}
.links{display:flex;align-items:center;gap:12px;border-top:1px solid #111;padding:0 9px 1px 0;height:25px}
a{display:flex;align-items:center;gap:5px;color:#111;text-decoration:none}a.off{color:#aaa}`,
`<side-strip>Peral</side-strip><main><div class="list"><table><colgroup><col><col style="width:266px"><col style="width:250px"><col style="width:152px"></colgroup>
<thead><tr><th>Perihal</th><th>Dari</th><th>Kepada</th><th style="text-align:right">Waktu</th></tr></thead></table>
<div class="bar">${ic('up')}${ic('down')}</div></div>
<div class="foot"><tab-bar>${tabs(['Transaksi','Pembukaan','Riwayat','Berita','Surat<sub>11</sub>&nbsp;','Kalender','Perusahaan','Peringatan','Artikel','Kode Dasar','Ahli','Jurnal'], 4)}</tab-bar>
<div class="links"><a href="#pasar">${ic('bag', 12)}Pasar</a><a class="off" href="#sinyal">${ic('signal', 15)}Sinyal</a><a href="#vps">${ic('cloud', 16)}VPS</a></div></div></main>`);

define('status-bar', `:host{display:flex;align-items:center;height:21px;padding-bottom:1px}
span{border-left:1px solid #808080;height:18px;line-height:18px;overflow:hidden;white-space:nowrap;padding-left:5px;flex:none;display:flex;align-items:center;gap:6px}
.first{flex:1;border:0;padding-left:2px}`,
`<span class="first">Untuk Bantuan, tekan F1</span>` +
[[78,'Market Overv'],[98,''],[71,''],[71,''],[68,''],[70,''],[67,''],[120, ic('ping') + '49.82 ms']].map(([w, t]) => `<span style="width:${w}px">${t}</span>`).join(''));

/* ---------- taskbar ---------- */
define('task-button', `:host{display:flex;flex:none;width:49px;height:40px;padding-right:1px}:host([sys]){width:48px;padding:0}
button{flex:1;display:flex;align-items:center;justify-content:center}
:host([run]) button{background:linear-gradient(#117a11,#117a11) 50% 100%/40px 2px no-repeat}
:host([cur]) button{background:linear-gradient(#117a11,#117a11) 0 100%/100% 2px no-repeat,#dfe8ef}`,
`<button><slot></slot></button>`, (el, r) => r.querySelector('button').setAttribute('aria-label', el.getAttribute('name')));
const tk = (n, a = '') => `<task-button name="${n}" ${a}>${ic(n)}</task-button>`;
define('task-bar', `:host{display:flex;align-items:center;height:40px;margin-top:auto;color:#1c1c1c;background:linear-gradient(90deg,#b6baba 0,#b2bab9 14%,#b0b8bc 30%,#a8b8c8 38%,#aabfd2 45%,#b4c9d8 52%,#b0c4ce 60%,#a8b8bc 70%,#a3b1b2 85%,#a6b0ae 100%)}
.apps{display:flex;margin-left:3px;flex:1}.tray{display:flex;align-items:center}
.w{display:flex;align-items:center;gap:8px;font-size:13px;margin-right:28px;white-space:pre}
.t{display:flex;gap:16px;align-items:center;margin-right:13px}
.clock{text-align:center;line-height:18px;padding-right:7px;margin-right:3px;border-right:1px solid #8f9a9a;height:40px;padding-top:1px}
.clock span{display:block}`,
tk('win', 'sys') + tk('find', 'sys') + '<div class="apps">' + tk('rdp') + tk('whatsapp') + tk('edge') + tk('chrome') + tk('files', 'run') + tk('chrome2', 'run') + tk('notepad') + tk('snip') + tk('monitor', 'run') + tk('mt5', 'cur') + tk('mt4') + tk('editor', 'run') + '</div>' +
`<div class="tray"><div class="w">${ic('weather')}<span>27°C  Berawan</span></div><div class="t">${ic('chevron')}${ic('battery')}${ic('wifi')}</div>
<div class="clock"><span>23.56</span><span>01/03/2026</span></div></div>`);

define('terminal-app', `:host{display:flex;flex-direction:column;min-height:100vh;overflow:hidden;cursor:default}
.work{display:flex;height:305px}`,
`<title-bar></title-bar><menu-bar></menu-bar><tool-bar></tool-bar>
<div class="work"><nav-panel></nav-panel><chart-area></chart-area></div>
<tester-panel></tester-panel><mail-panel></mail-panel><status-bar></status-bar><task-bar></task-bar>`);
</script>
</body>
</html>
